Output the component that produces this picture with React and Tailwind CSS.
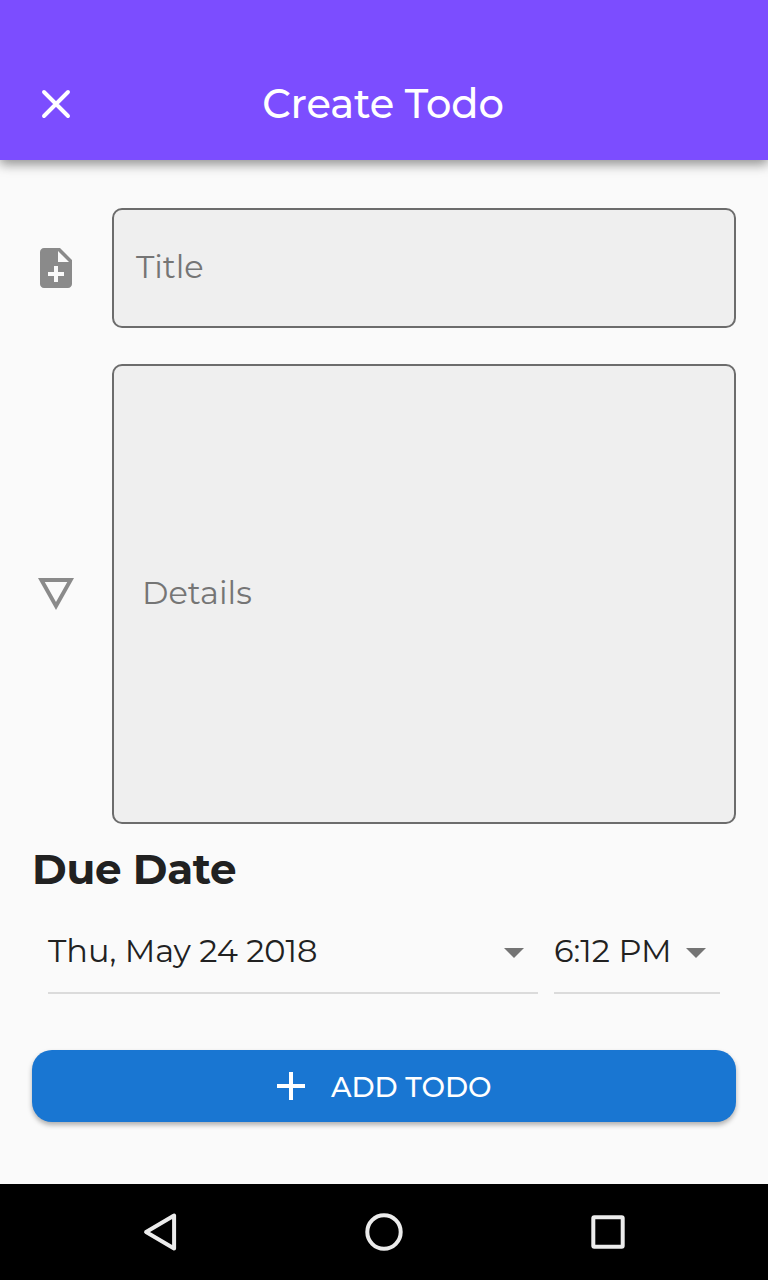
const icons = {
  noteAdd:
    "M14 2H6c-1.1 0-1.99.9-1.99 2L4 20c0 1.1.89 2 1.99 2H18c1.1 0 2-.9 2-2V8l-6-6zm2 14h-3v3h-2v-3H8v-2h3v-3h2v3h3v2zm-3-7V3.5L18.5 9H13z",
  details: "M3 4l9 16 9-16H3zm3.38 2h11.25L12 16 6.38 6z",
  dropDown: "M7 10l5 5 5-5z",
  add: "M19 13h-6v6h-2v-6H5v-2h6V5h2v6h6v2z",
};

function Icon({ name, className }) {
  return (
    <svg viewBox="0 0 24 24" fill="currentColor" className={`size-12 shrink-0 ${className}`}>
      <path d={icons[name]} />
    </svg>
  );
}

function Field({ icon, className, children }) {
  return (
    <div className={`flex items-center gap-8 pr-8 pl-8 ${className}`}>
      <Icon name={icon} className="text-[#8a8a8a]" />
      <div className="flex h-full flex-1 items-center rounded-[10px] border-2 border-[#6c6c6c] bg-[#efefef] pb-0.5 text-[32px] font-normal text-[#757575]">
        {children}
      </div>
    </div>
  );
}

function Picker({ className, children }) {
  return (
    <div className={`flex h-[66px] items-start justify-between border-b-2 border-[#dbdbdb] text-[32px] leading-[46px] font-normal text-[#212121] ${className}`}>
      {children}
      <Icon name="dropDown" className="text-[#747474]" />
    </div>
  );
}

export default function App() {
  return (
    <div className="flex h-[1280px] w-[768px] flex-col overflow-hidden bg-[#fafafa] font-['Montserrat','Inter',sans-serif] whitespace-nowrap">
      <header className="grid h-40 shrink-0 grid-cols-[112px_1fr_112px] items-center bg-[#7c4dff] pt-12 text-white shadow-[0_4px_12px_rgba(0,0,0,0.25),0_4px_10px_rgba(0,0,0,0.22)]">
        <svg viewBox="0 0 48 48" className="ml-8 size-12" fill="none" stroke="currentColor" strokeWidth="3.9" strokeLinecap="round">
          <path d="M12 12l24 24M36 12L12 36" />
        </svg>
        <h1 className="pr-0.5 text-center text-[40px] leading-[48px] font-medium tracking-[-0.1px]">Create Todo</h1>
      </header>

      <main className="flex flex-1 flex-col">
        <Field icon="noteAdd" className="mt-12 h-[120px]">
          <span className="ml-[22px]">Title</span>
        </Field>
        <Field icon="details" className="mt-9 h-[460px]">
          <span className="ml-7">Details</span>
        </Field>

        <h2 className="mt-5 ml-8 h-[50px] text-[42px] leading-[50px] font-bold tracking-[-0.3px] text-[#212121]">Due Date</h2>

        <div className="mt-[34px] flex gap-4 px-12">
          <Picker className="flex-1">Thu, May 24 2018</Picker>
          <Picker className="w-[166px]">6:12 PM</Picker>
        </div>

        <button className="mx-8 mt-14 flex h-[72px] items-center rounded-[20px] bg-[#1976d2] pl-[235px] text-white shadow-[0_3px_5px_rgba(0,0,0,0.3)]">
          <Icon name="add" className="" />
          <span className="mt-0.5 ml-4 text-[28px] leading-none font-medium">ADD TODO</span>
        </button>
      </main>

      <nav className="flex h-24 shrink-0 items-center justify-around bg-black px-12 text-[#ececec]">
        <svg viewBox="0 0 48 48" className="size-12" fill="none" stroke="currentColor" strokeWidth="4" strokeLinejoin="round">
          <path d="M38.1 7.5v33L10.1 24z" />
        </svg>
        <svg viewBox="0 0 48 48" className="size-12" fill="none" stroke="currentColor" strokeWidth="4">
          <circle cx="24" cy="24" r="16.7" />
        </svg>
        <svg viewBox="0 0 48 48" className="size-12" fill="none" stroke="currentColor" strokeWidth="4">
          <rect x="9.3" y="9.3" width="29.4" height="29.4" rx="1" />
        </svg>
      </nav>
    </div>
  );
}
